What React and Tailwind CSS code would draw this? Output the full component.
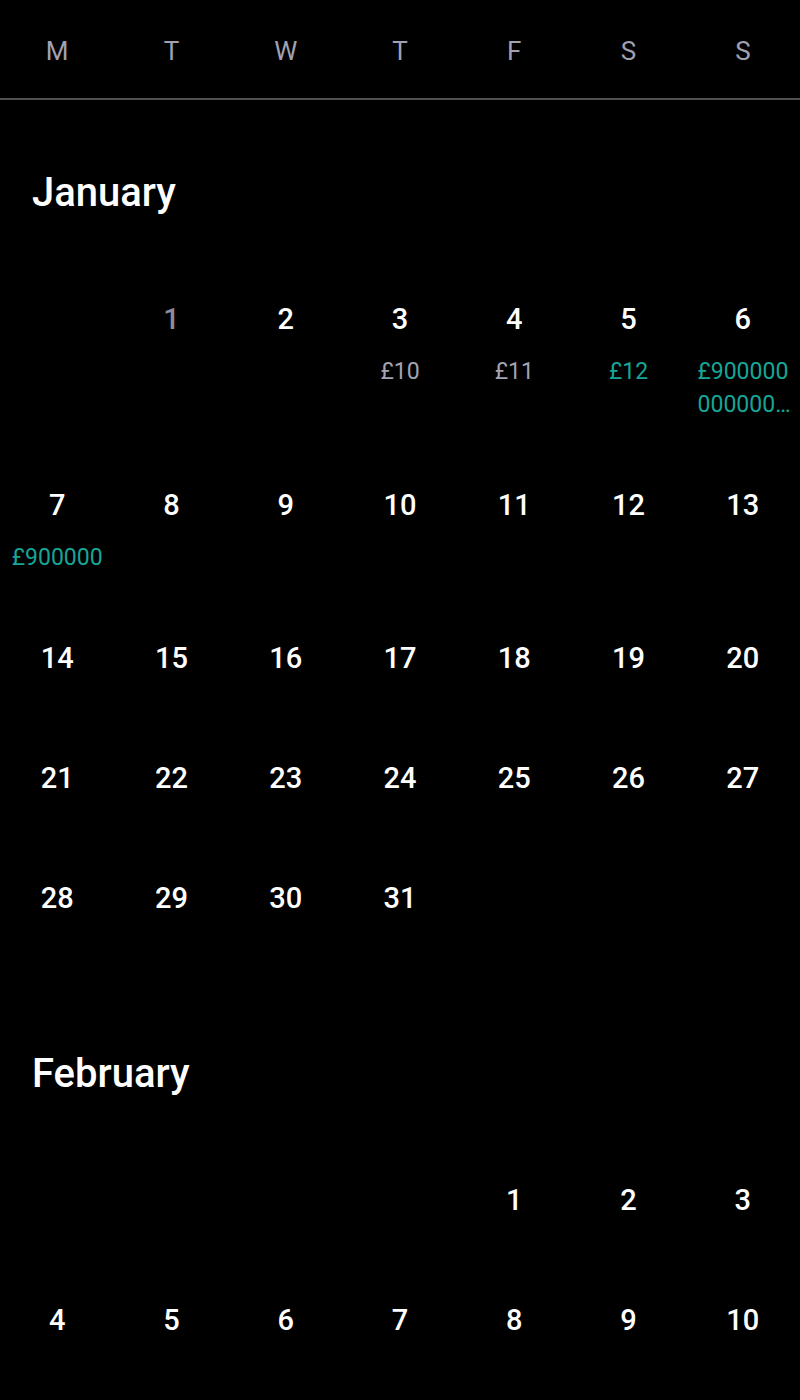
import React from "react";

const DAYS = ["M", "T", "W", "T", "F", "S", "S"];

const amounts = {
  "0-3": { text: "£10", tone: "grey" },
  "0-4": { text: "£11", tone: "grey" },
  "0-5": { text: "£12", tone: "teal" },
  "0-6": { text: "£900000000000000000", tone: "teal" },
  "0-7": { text: "£900000", tone: "teal" },
};

const months = [
  { name: "January", idx: 0, offset: 1, days: 31 },
  { name: "February", idx: 1, offset: 4, days: 28 },
];

function Cell({ m, d }) {
  if (!d) return <div />;
  const a = amounts[`${m.idx}-${d}`];
  const disabled = m.idx === 0 && d === 1;
  return (
    <div className="flex flex-col items-center pt-[44px] pb-6 px-2">
      <div
        className={`h-8 leading-8 text-[29px] font-medium ${
          disabled ? "text-[#8c8c9c]" : "text-white"
        }`}
      >
        {d}
      </div>
      <div className="mt-5 w-full text-center">
        {a && (
          <div
            className={`text-[23px] leading-[33px] break-all line-clamp-2 ${
              a.tone === "teal" ? "text-[#17a597]" : "text-[#a3a3b1]"
            }`}
          >
            {a.text}
          </div>
        )}
      </div>
    </div>
  );
}

function Month({ m }) {
  const cells = [];
  for (let i = 0; i < m.offset; i++) cells.push(null);
  for (let d = 1; d <= m.days; d++) cells.push(d);
  return (
    <section className="pt-[71px] pb-[23px]">
      <h2 className="h-11 leading-[44px] px-[32px] text-[40px] font-medium text-white">
        {m.name}
      </h2>
      <div className="mt-11 grid grid-cols-7">
        {cells.map((d, i) => (
          <Cell key={i} m={m} d={d} />
        ))}
      </div>
    </section>
  );
}

export default function App() {
  return (
    <div
      className="min-h-[1400px] w-[800px] bg-black"
      style={{ fontFamily: "Roboto, 'Noto Sans', sans-serif" }}
    >
      <div className="grid grid-cols-7 h-[100px] border-b-2 border-[#4f4f4f] items-center">
        {DAYS.map((d, i) => (
          <div
            key={i}
            className="text-center text-[26px] font-normal text-[#a1a1b2] pt-[5px]"
          >
            {d}
          </div>
        ))}
      </div>
      {months.map((m) => (
        <Month key={m.name} m={m} />
      ))}
    </div>
  );
}
